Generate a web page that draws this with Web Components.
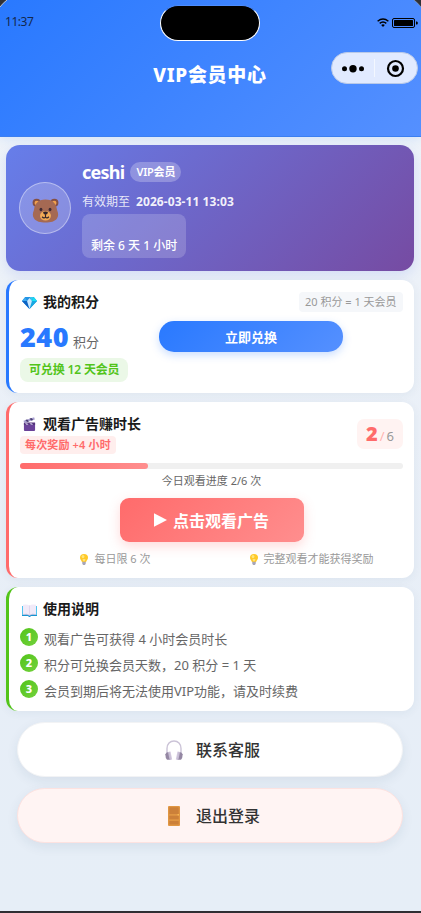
<!DOCTYPE html>
<html lang="zh-CN">
<head>
<meta charset="utf-8">
<title>VIP会员中心</title>
<style>
html,body{margin:0;height:100%;overflow:hidden}
body{font-family:"Noto Sans","Noto Sans CJK SC",sans-serif;color:#1a1a1a}
</style>
</head>
<body>
<vip-page></vip-page>
<script>
const define=(name,html)=>{
  const t=document.createElement('template');t.innerHTML=html;
  customElements.define(name,class extends HTMLElement{
    constructor(){super();this.attachShadow({mode:'open'}).append(t.content.cloneNode(true));}
  });
};

const ICONS={
bear:['0 0 28 26','<g><circle cx="4.8" cy="5" r="4.2" fill="#855043"/><circle cx="23.2" cy="5" r="4.2" fill="#855043"/><circle cx="5" cy="5.2" r="2.4" fill="#f2a04b"/><circle cx="23" cy="5.2" r="2.4" fill="#f2a04b"/><path d="M14 1.5C22 1.5 25 6 26 12.500C27.500 16 27.500 19 26 21C24 24.500 19 25.500 14 25.500S4 24.500 2 21C.5 19 .5 16 2 12.500C3 6 6 1.500 14 1.500Z" fill="#a56953"/><ellipse cx="14" cy="18.500" rx="5.700" ry="5" fill="#f2ab57"/><ellipse cx="9.300" cy="12" rx="1.500" ry="1.900" fill="#402a32"/><ellipse cx="18.700" cy="12" rx="1.500" ry="1.900" fill="#402a32"/><path d="M11.500 14.500q2.500-1 5 0q0 2.500-2.500 3q-2.500-.5-2.500-3Z" fill="#33242b"/><path d="M14 17v2.500M10.500 19.500q2 2.300 3.500.3q1.500 2 3.500-.3" fill="none" stroke="#33242b" stroke-width="1.200"/></g>'],
gem:['0 0 14 12','<path d="M3 0h8l3 4-7 8-7-8Z" fill="#1683dc"/><path d="M0 4 3 0l2 4Z" fill="#3aa9ef"/><path d="M0 4h5l2 8Z" fill="#0c63c4"/><path d="M3 0h4L5 4Z" fill="#2394e4"/><path d="M7 0h4l-2 4Z" fill="#35c8f0"/><path d="m11 0 3 4H9Z" fill="#16e1f3"/><path d="M14 4H9l-2 8Z" fill="#18a9e2"/><path d="M7 1 4.700 4 7 12 9.300 4Z" fill="#c9e8ff"/>'],
clap:['0 0 14 14','<path d="M1 6h12v7a1 1 0 0 1-1 1H2a1 1 0 0 1-1-1Z" fill="#6a4299"/><path d="M1 5.500h12V8H1Z" fill="#54347c"/><path d="M.5 3.700 12 .2l.8 2.300L1.300 6Z" fill="#a9a0d0"/><path d="m2.500 3.100 2 1.800 2-.6-2-1.800ZM7 1.700l2 1.800 2-.6L9 1.100Z" fill="#483d70"/><path d="m2 6.200 1.500 1.500H6L4.500 6.200Zm5 0 1.500 1.500H11L9.500 6.200Z" fill="#c7bce2"/>'],
bulb:['0 0 8 12','<path d="M4 0a4 4 0 0 1 4 4c0 2.200-1.600 2.800-2 5H2C1.600 6.800 0 6.200 0 4a4 4 0 0 1 4-4Z" fill="#ffc928"/><ellipse cx="3" cy="2.800" rx="1.400" ry="1.700" fill="#ffe67a"/><path d="M2.300 8.400h3.400v2.200L4.900 12H3.100l-.8-1.400Z" fill="#a7a5b8"/><path d="M2.500 5.500h3L4.800 8H3.200Z" fill="#ffe27a"/>'],
book:['0 0 15 13','<path d="M0 2h15v10H9l-1 1H7l-1-1H0Z" fill="#1693d0"/><path d="M0 2h1v9H0Zm14 0h1v9h-1Z" fill="#52c4ee"/><path d="M1 .8Q4.800-.3 7.500 1.500 10.200-.3 14 .8v10Q10 9.800 7.500 11.300 5 9.800 1 10.800Z" fill="#f1eaf8"/><path d="M1 10.500q3.800-1 6.500.8 2.700-1.800 6.500-.8" fill="none" stroke="#c7bddb" stroke-width=".7"/><path d="M7.500 1.500v9.800" stroke="#ddd2ea" stroke-width=".8"/>'],
phones:['0 0 18 20','<path d="M2 14V8.500C2 4 5 1 9 1s7 3 7 7.500V14" fill="none" stroke="#cbc3d7" stroke-width="1.400"/><path d="m3.500 12 2-.4 1.700 8-2.700.2Z" fill="#d3cadf"/><path d="M.3 14.200q1-2.200 3.500-2.200l1.500 7.700H2Q.4 18 .3 14.200Z" fill="#9487a3"/><path d="m3 12 1.600-.3 1.700 8H4.600Z" fill="#c9bfd6"/><path d="m14.500 12-2-.4-1.700 8 2.700.2Z" fill="#d3cadf"/><path d="M17.700 14.200q-1-2.200-3.500-2.200l-1.500 7.700H16q1.600-1.700 1.700-5.500Z" fill="#9487a3"/><path d="m15 12-1.600-.3-1.700 8h1.700Z" fill="#c9bfd6"/>'],
door:['0 0 12 20','<rect width="12" height="20" rx="1" fill="#e09643"/><rect x="1.300" y="1.300" width="9.400" height="6.700" rx=".5" fill="#cc8039"/><rect x="1.300" y="9.700" width="9.400" height="3.600" rx=".5" fill="#cc8039"/><rect x="1.300" y="15" width="9.400" height="3.600" rx=".5" fill="#cc8039"/><circle cx="10.200" cy="8.800" r=".7" fill="#ffc55c"/>'],
play:['0 0 13 14','<path d="M0 .3 13 7 0 13.700Z" fill="#fff"/>'],
wifi:['0 0 12 9','<path d="M.6 3.200Q6-1.400 11.400 3.200M2.700 5.400q3.300-2.800 6.600 0" fill="none" stroke="#000" stroke-width="1.400"/><path d="M4.200 6.900Q6 5.500 7.800 6.900L6 9Z" fill="#000"/>'],
battery:['0 0 26 10','<rect x=".5" y=".5" width="22" height="9" rx="1.500" fill="none" stroke="#000"/><rect x="2" y="2" width="19" height="6" rx=".5" fill="#000"/><path d="M24 3.500h.8q1 0 1 1.500t-1 1.500H24Z" fill="#000"/>']
};
customElements.define('ui-icon',class extends HTMLElement{
  connectedCallback(){
    if(this.shadowRoot)return;
    const [vb,body]=ICONS[this.getAttribute('name')];
    this.attachShadow({mode:'open'}).innerHTML='<style>:host{display:inline-block;flex:none}svg{display:block;width:100%;height:100%}</style><svg viewBox="'+vb+'" preserveAspectRatio="none">'+body+'</svg>';
  }
});

define('status-header',`<style>
:host{display:block;position:relative;box-sizing:border-box;height:137px;background:linear-gradient(135deg,#2979ff,#5590ff);border-bottom:1px solid #3c7ff0;box-shadow:0 2px 10px rgba(41,121,255,.13)}
.bar{display:flex;justify-content:space-between;align-items:center;height:44px;padding:0 3px 0 5px;color:#14284d;font-size:12px}
.time{line-height:44px;letter-spacing:-.45px}
.sig{display:flex;gap:3px;align-items:center;padding-top:1px}
.wifi{width:12px;height:9px}.battery{width:26px;height:10px}
h1{margin:16px 0 0;text-align:center;font-size:19px;line-height:30px;font-weight:800;letter-spacing:.7px;color:#fff;padding-right:1px}
.island{position:absolute;left:160px;top:5px;width:98px;height:34px;border:1px solid #fff;border-top-color:#4d8dff;border-radius:18px;background:#000}
.capsule{position:absolute;left:331px;top:52px;box-sizing:border-box;width:87px;height:32px;border:1px solid #b9c9e8;border-radius:16px;background:#e1eaff;display:flex;align-items:center}
.capsule svg{display:block}
.corner{position:absolute;top:0;width:7px;height:7px}
.l{left:0}.r{right:0;transform:scaleX(-1)}
</style>
<div class="bar"><span class="time">11:37</span><span class="sig"><ui-icon class="wifi" name="wifi"></ui-icon><ui-icon class="battery" name="battery"></ui-icon></span></div>
<h1>VIP会员中心</h1>
<div class="island"></div>
<div class="capsule"><svg width="85" height="30"><circle cx="12.500" cy="15.700" r="2.500"/><circle cx="21" cy="15.700" r="3.700"/><circle cx="29.500" cy="15.700" r="2.500"/><path d="M42.500 6v18" stroke="#f3f7ff"/><circle cx="63.500" cy="15.500" r="7.500" fill="none" stroke="#000" stroke-width="2.200"/><circle cx="63.500" cy="15.500" r="3.300"/></svg></div>
<svg class="corner l"><path d="M0 0h7Q3 3 0 7Z" fill="#303136"/><path d="M7 0Q3 3 0 7" fill="none" stroke="#b8c4d8"/></svg>
<svg class="corner r"><path d="M0 0h7Q3 3 0 7Z" fill="#303136"/><path d="M7 0Q3 3 0 7" fill="none" stroke="#9aa8c0" stroke-width=".6"/></svg>`);

define('member-card',`<style>
:host{display:flex;box-sizing:border-box;height:126px;padding:0 13px;align-items:center;gap:11px;border-radius:14px;background:linear-gradient(135deg,#667eea,#764ba2);box-shadow:0 4px 12px rgba(102,126,234,.18);color:#fff}
.avatar{box-sizing:border-box;width:52px;height:52px;border-radius:50%;border:1px solid rgba(255,255,255,.4);background:rgba(255,255,255,.2);display:grid;place-items:center;padding-top:5px}
.avatar ui-icon{width:27px;height:25px}
.info{display:flex;flex-direction:column;align-items:flex-start;align-self:flex-start;padding-top:17px}
.name{display:flex;align-items:center;gap:6px;height:20px}
b{font-size:18px;line-height:20px;font-weight:700;letter-spacing:-.75px}
.tag{font-size:11px;line-height:20px;font-weight:600;padding:0 6px;border-radius:10px;background:rgba(255,255,255,.25);letter-spacing:-.2px}
.date{display:flex;gap:6px;font-size:12px;line-height:20px;margin-top:10px;color:rgba(255,255,255,.85)}
.date strong{font-weight:700;color:rgba(255,255,255,.93);letter-spacing:.08px}
.left{box-sizing:border-box;width:104px;height:44px;margin-top:2px;padding:22px 0 0 9px;border-radius:8px;background:rgba(255,255,255,.18);font-size:12px;line-height:20px;font-weight:500;white-space:nowrap}
</style>
<div class="avatar"><ui-icon name="bear"></ui-icon></div>
<div class="info"><div class="name"><b>ceshi</b><span class="tag">VIP会员</span></div>
<div class="date"><span>有效期至</span><strong>2026-03-11 13:03</strong></div>
<div class="left">剩余 6 天 1 小时</div></div>`);

define('info-card',`<style>
:host{display:block;box-sizing:border-box;background:#fff;border-left:3px solid var(--accent);border-radius:12px;padding:12px 11px 0;box-shadow:0 2px 10px rgba(30,60,100,.06)}
header{display:flex;align-items:center;height:20px}
.ic{display:flex;justify-content:center;width:19px;margin-right:4px;padding-top:var(--icon-drop,2px)}
h2{flex:1;margin:0;font-size:14px;line-height:20px;font-weight:600}
</style><header><span class="ic"><slot name="icon"></slot></span><h2><slot name="title"></slot></h2><slot name="extra"></slot></header><slot></slot>`);

define('points-card',`<style>
:host{display:block}
info-card{--accent:#2979ff;height:113px}
.gem{width:15px;height:12px}
.rate{font-size:11px;line-height:20px;padding:0 6px;border-radius:4px;background:#f5f7fa;color:#999;box-sizing:border-box;width:104px;white-space:nowrap}
.row{display:flex;height:71px}
.pts{width:139px;padding-top:10px}
.num{display:flex;align-items:baseline;gap:4px;height:30px;line-height:30px;color:#666;font-size:13px}
.num b{font-size:27px;font-weight:900;color:#2979ff;letter-spacing:.5px;width:49px}
.can{display:inline-block;box-sizing:border-box;width:108px;margin-top:6px;padding-left:9px;line-height:24px;border-radius:8px;background:#ebf8e7;color:#52c41a;font-size:12px;font-weight:600;letter-spacing:-.15px;white-space:nowrap}
.btn{margin-top:9px;width:184px;height:31px;border-radius:15px;background:linear-gradient(135deg,#2979ff,#5590ff);box-shadow:0 3px 9px rgba(41,121,255,.25);color:#fff;text-align:center;font-size:13px;font-weight:700;line-height:32px}
</style>
<info-card><ui-icon class="gem" slot="icon" name="gem"></ui-icon><span slot="title">我的积分</span><span class="rate" slot="extra">20 积分 = 1 天会员</span>
<div class="row"><div class="pts"><div class="num"><b>240</b><span>积分</span></div><span class="can">可兑换 12 天会员</span></div><div class="btn">立即兑换</div></div></info-card>`);

define('ad-card',`<style>
:host{display:block}
info-card{--accent:#ff6b6b;--icon-drop:0px;height:176px}
.clap{width:13px;height:14px}
.sub{display:flex;justify-content:space-between;height:29px}
.reward{box-sizing:border-box;width:96px;height:18px;margin-top:2px;padding-left:5px;border-radius:4px;background:#ffeeed;color:#ff6b6b;font-size:11px;line-height:18px;font-weight:600;letter-spacing:.15px;white-space:nowrap}
.count{box-sizing:border-box;width:46px;height:30px;margin-top:-15px;border-radius:7px;background:#fff3f2;display:flex;align-items:baseline;justify-content:center;gap:2px;line-height:30px;font-size:13px;color:#999}
.count b{font-size:20px;font-weight:900;color:#ff6b6b}.count i{font-style:normal;color:#ffb3b0}
.track{height:6px;border-radius:3px;background:#f0f0f0}
.fill{width:33.400%;height:6px;border-radius:3px;background:linear-gradient(90deg,#ff6b6b,#ff8e8e)}
.prog{text-align:center;font-size:11px;line-height:16px;margin-top:4px;color:#666}
.btn{display:flex;align-items:center;justify-content:center;gap:6px;width:184px;height:44px;margin:9px auto 0;border-radius:9px;background:linear-gradient(135deg,#ff6b6b,#ff8e8e);box-shadow:0 4px 12px rgba(255,107,107,.25);color:#fff;font-size:16px;font-weight:700}
.btn ui-icon{width:13px;height:14px}
.tips{display:grid;grid-template-columns:191px 1fr;margin-top:9px;font-size:11px;line-height:16px;color:#999}
.tips span{display:flex;justify-content:center;align-items:center;gap:6px}
.tips span+span{padding-left:9px}
.tips ui-icon{width:8px;height:11px}
</style>
<info-card><ui-icon class="clap" slot="icon" name="clap"></ui-icon><span slot="title">观看广告赚时长</span>
<div class="sub"><div class="reward">每次奖励 +4 小时</div><div class="count"><b>2</b><i>/</i><span>6</span></div></div>
<div class="track"><div class="fill"></div></div><div class="prog">今日观看进度 2/6 次</div>
<div class="btn"><ui-icon name="play"></ui-icon><span>点击观看广告</span></div>
<div class="tips"><span><ui-icon name="bulb"></ui-icon>每日限 6 次</span><span><ui-icon name="bulb"></ui-icon>完整观看才能获得奖励</span></div></info-card>`);

define('guide-item',`<style>
:host{display:flex;gap:6px;height:18px;font-size:13px;color:#666;white-space:nowrap}
.n{width:18px;height:18px;border-radius:50%;background:linear-gradient(135deg,#52c41a,#73d13d);color:#fff;text-align:center;font-size:11px;line-height:18px;font-weight:800}
.t{line-height:22px}
</style><span class="n"><slot name="n"></slot></span><span class="t"><slot></slot></span>`);

define('guide-card',`<style>
:host{display:block}
info-card{--accent:#52c41a;height:124px}
.book{width:15px;height:13px}
.list{display:grid;gap:8px;margin-top:9px}
</style>
<info-card><ui-icon class="book" slot="icon" name="book"></ui-icon><span slot="title">使用说明</span>
<div class="list"><guide-item><span slot="n">1</span>观看广告可获得 4 小时会员时长</guide-item><guide-item><span slot="n">2</span>积分可兑换会员天数，20 积分 = 1 天</guide-item><guide-item><span slot="n">3</span>会员到期后将无法使用VIP功能，请及时续费</guide-item></div></info-card>`);

define('pill-button',`<style>
:host{display:flex;align-items:center;justify-content:center;gap:13px;box-sizing:border-box;height:55px;padding-left:5px;border:1px solid var(--line,#f2f3f5);border-radius:28px;background:var(--bg,#fff);box-shadow:0 4px 12px rgba(30,60,90,.08);font-size:16px;font-weight:500;color:#333}
span{line-height:24px;padding-top:1px}
</style><slot name="icon"></slot><span><slot></slot></span>`);

define('vip-page',`<style>
:host{display:flex;flex-direction:column;box-sizing:border-box;height:913px;border-bottom:2px solid #302e33;background:linear-gradient(180deg,#f0f4f9 0,#e7eef7 70%,#e6eef7)}
main{display:flex;flex-direction:column;gap:9px;padding:8px 7px 0 6px}
nav{display:grid;gap:11px;padding:2px 11px 0}
.p{width:18px;height:20px}.d{width:12px;height:20px;margin:0 3px}
.out{--bg:#fff4f3;--line:#fde2e0}
</style>
<status-header></status-header>
<main><member-card></member-card><points-card></points-card><ad-card></ad-card><guide-card></guide-card>
<nav><pill-button><ui-icon class="p" slot="icon" name="phones"></ui-icon>联系客服</pill-button><pill-button class="out"><ui-icon class="d" slot="icon" name="door"></ui-icon>退出登录</pill-button></nav></main>`);
</script>
</body>
</html>
